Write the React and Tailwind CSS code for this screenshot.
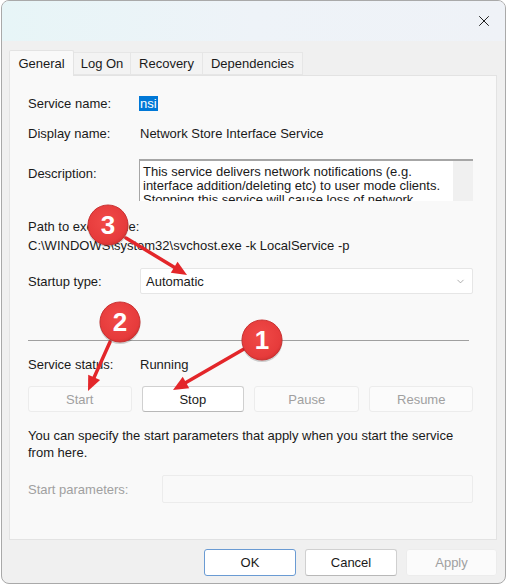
import { X, ChevronDown } from 'lucide-react'

const FONT = { fontFamily: '"Liberation Sans", Arial, sans-serif' }

// arrow from (x1,y1) to tip (x2,y2)
function Arrow({ x1, y1, x2, y2 }) {
  const dx = x2 - x1
  const dy = y2 - y1
  const len = Math.hypot(dx, dy)
  const ux = dx / len
  const uy = dy / len
  const bx = x2 - ux * 15
  const by = y2 - uy * 15
  const px = -uy * 6.5
  const py = ux * 6.5
  return (
    <g>
      <line x1={x1} y1={y1} x2={bx + ux * 2} y2={by + uy * 2} stroke="#e3262a" strokeWidth="3.5" strokeLinecap="round" />
      <polygon points={`${x2},${y2} ${bx + px},${by + py} ${bx - px},${by - py}`} fill="#e3262a" />
    </g>
  )
}

function Badge({ cx, cy, n }) {
  return (
    <g>
      <circle cx={cx} cy={cy + 1.5} r="20.5" fill="rgba(0,0,0,0.18)" />
      <circle cx={cx} cy={cy} r="20" fill="url(#badgeFill)" stroke="#c93232" strokeWidth="1" />
      <text
        x={cx}
        y={cy + 9}
        textAnchor="middle"
        fill="#fff"
        fontSize="26"
        fontWeight="bold"
        fontFamily='"Liberation Sans", Arial, sans-serif'
      >
        {n}
      </text>
    </g>
  )
}

function Btn({ children, disabled, primary, className = '' }) {
  let look = 'bg-white border-[#d0d0d0] border-b-[#b8b8b8] text-[#1a1a1a]'
  if (disabled) look = 'bg-[#fbfbfb] border-[#ececec] text-[#a0a0a0]'
  if (primary) look = 'bg-white border-[#6a9bd3] text-[#1a1a1a]'
  return (
    <div className={`flex items-center justify-center border rounded-[3px] text-[13px] ${look} ${className}`}>
      {children}
    </div>
  )
}

export default function App() {
  return (
    <div className="relative w-[507px] h-[585px] bg-white overflow-hidden" style={FONT}>
      <div className="ml-[1px] w-[505px] h-[584px] flex flex-col border border-[#a9a9a9] rounded-[8px] overflow-hidden bg-[#f0f0f0]">
        {/* Title bar */}
        <div className="h-[40px] shrink-0 flex items-center justify-end pr-[12px] bg-gradient-to-r from-[#e7f5f7] via-[#eef3f8] to-[#eff2f7]">
          <X size={18} strokeWidth={1.3} className="text-[#1a1a1a]" />
        </div>

        {/* Body */}
        <div className="flex-1 flex flex-col pt-[8px] pl-[7px] pr-[8px]">
          {/* Tabs */}
          <div className="flex items-end h-[26px] text-[13px] text-[#1a1a1a]">
            <div className="relative z-10 w-[65px] h-[26px] -mb-px flex items-center justify-center bg-[#f9f9f9] border border-b-0 border-[#e3e3e3] rounded-t-[2px]">
              General
            </div>
            <div className="w-[57px] h-[23px] flex items-center justify-center bg-[#f3f3f3] border border-[#e6e6e6] border-l-0">
              Log On
            </div>
            <div className="w-[72px] h-[23px] flex items-center justify-center bg-[#f3f3f3] border border-[#e6e6e6] border-l-0">
              Recovery
            </div>
            <div className="w-[100px] h-[23px] flex items-center justify-center bg-[#f3f3f3] border border-[#e6e6e6] border-l-0">
              Dependencies
            </div>
          </div>

          {/* Panel */}
          <div className="h-[465px] bg-[#f9f9f9] border border-[#e3e3e3] pl-[18px] pr-[23px] text-[13px] leading-[15px] text-[#1a1a1a] flex flex-col">
            <div className="flex mt-[20px] h-[15px]">
              <div className="w-[111px]">Service name:</div>
              <div className="bg-[#0078d7] text-white px-[1px]">nsi</div>
            </div>

            <div className="flex mt-[15px] h-[15px]">
              <div className="w-[112px]">Display name:</div>
              <div>Network Store Interface Service</div>
            </div>

            <div className="flex mt-[18px] h-[42px]">
              <div className="w-[111px] pt-[7px]">Description:</div>
              <div className="flex-1 flex bg-white border-t-2 border-l border-[#a6a6a6] overflow-hidden">
                <div className="flex-1 pl-[3px] pt-[4px] leading-[14px]">
                  This service delivers network notifications (e.g. interface addition/deleting etc) to user mode clients. Stopping this service will cause loss of network
                </div>
                <div className="w-[20px] bg-[#f0f0f0]" />
              </div>
            </div>

            <div className="mt-[18px] h-[15px]">Path to executable:</div>
            <div className="mt-[4px] h-[15px]">C:\WINDOWS\system32\svchost.exe -k LocalService -p</div>

            <div className="flex items-center mt-[15px] h-[26px]">
              <div className="w-[112px]">Startup type:</div>
              <div className="flex-1 h-[26px] flex items-center justify-between bg-white border border-[#e6e6e6] rounded-[2px] pl-[5px] pr-[6px]">
                <span>Automatic</span>
                <ChevronDown size={11} strokeWidth={1.5} className="text-[#8a8a8a]" />
              </div>
            </div>

            <div className="mt-[46px] h-px bg-[#a0a0a0] mr-[4px]" />

            <div className="flex mt-[16px] h-[15px]">
              <div className="w-[112px]">Service status:</div>
              <div>Running</div>
            </div>

            <div className="flex mt-[14px] h-[26px] gap-[10px]">
              <Btn disabled className="w-[104px]">Start</Btn>
              <Btn className="w-[103px]">Stop</Btn>
              <Btn disabled className="w-[106px]">Pause</Btn>
              <Btn disabled className="w-[104px]">Resume</Btn>
            </div>

            <div className="mt-[15px] leading-[17px]">
              You can specify the start parameters that apply when you start the service from here.
            </div>

            <div className="flex items-center mt-[14px] h-[28px]">
              <div className="w-[134px] text-[#a0a0a0]">Start parameters:</div>
              <div className="flex-1 h-[28px] bg-[#f9f9f9] border border-[#ececec] rounded-[2px]" />
            </div>
          </div>

          {/* Dialog buttons */}
          <div className="flex justify-end gap-[9px] mt-[9px]">
            <Btn primary className="w-[92px] h-[27px]">OK</Btn>
            <Btn className="w-[92px] h-[27px]">Cancel</Btn>
            <Btn disabled className="w-[91px] h-[27px] bg-[#f4f4f4]">Apply</Btn>
          </div>
        </div>
      </div>

      {/* Annotations */}
      <svg className="absolute inset-0 pointer-events-none" width="507" height="585">
        <defs>
          <radialGradient id="badgeFill" cx="45%" cy="40%" r="65%">
            <stop offset="0%" stopColor="#f04a48" />
            <stop offset="80%" stopColor="#e63b3b" />
            <stop offset="100%" stopColor="#cf3030" />
          </radialGradient>
        </defs>
        <Arrow x1={126} y1={238} x2={187} y2={275} />
        <Arrow x1={110} y1={342} x2={88} y2={391} />
        <Arrow x1={244} y1={349} x2={173} y2={390} />
        <Badge cx={108} cy={225} n="3" />
        <Badge cx={120} cy={322} n="2" />
        <Badge cx={262} cy={340} n="1" />
      </svg>
    </div>
  )
}
